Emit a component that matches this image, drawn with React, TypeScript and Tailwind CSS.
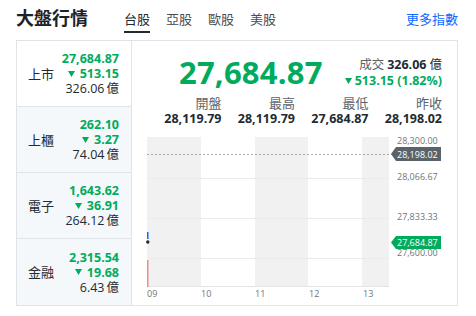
import React from "react";

const GREEN = "#00ab5e";

function Tri({ className = "" }: { className?: string }) {
  return (
    <svg width="7" height="6" viewBox="0 0 7 6" className={className}>
      <polygon points="0,0 7,0 3.5,6" fill={GREEN} />
    </svg>
  );
}

type Row = { name: string; price: string; chg: string; vol: string };

const rows: Row[] = [
  { name: "上市", price: "27,684.87", chg: "513.15", vol: "326.06" },
  { name: "上櫃", price: "262.10", chg: "3.27", vol: "74.04" },
  { name: "電子", price: "1,643.62", chg: "36.91", vol: "264.12" },
  { name: "金融", price: "2,315.54", chg: "19.68", vol: "6.43" },
];

const stats = [
  { label: "開盤", value: "28,119.79" },
  { label: "最高", value: "28,119.79" },
  { label: "最低", value: "27,684.87" },
  { label: "昨收", value: "28,198.02" },
];

function Chart() {
  const whiteBands = [
    { x: 69, w: 54 },
    { x: 176, w: 54 },
  ];
  const grid = [48, 88, 128];
  const priceLabels = [
    { t: "28,300.00", y: 11 },
    { t: "28,066.67", y: 47 },
    { t: "27,833.33", y: 87 },
    { t: "27,600.00", y: 123 },
  ];
  const times = [
    { t: "09", x: 15 },
    { t: "10", x: 69 },
    { t: "11", x: 123 },
    { t: "12", x: 177 },
    { t: "13", x: 231 },
  ];
  return (
    <svg width="325" height="174" viewBox="0 0 325 174" className="block">
      <rect x="15" y="7" width="242" height="150" fill="#f1f1f1" />
      {whiteBands.map((b, i) => (
        <rect key={i} x={b.x} y="7" width={b.w} height="150" fill="#ffffff" />
      ))}
      {grid.map((g) => (
        <line key={g} x1="15" x2="257" y1={g + 0.5} y2={g + 0.5} stroke="#eaeaea" strokeWidth="1" />
      ))}
      <line x1="15" x2="257" y1="156.5" y2="156.5" stroke="#e4e4e4" strokeWidth="1" />
      <line x1="15" x2="262" y1="24.5" y2="24.5" stroke="#a8a8a8" strokeWidth="1" strokeDasharray="2 2" />
      <rect x="15" y="130" width="1.5" height="27" fill="#f28b8b" />
      <rect x="15" y="102" width="1.5" height="7" fill="#0f69ff" />
      <circle cx="15.8" cy="112" r="1.7" fill="#232a31" />
      {priceLabels.map((p) => (
        <text key={p.t} x="265" y={p.y + 3} fontSize="9" fill="#6e757c">
          {p.t}
        </text>
      ))}
      <polygon points="259,24 264,17 309,17 309,31 264,31" fill="#5b636a" />
      <text x="265" y="27.5" fontSize="9" fill="#ffffff">
        28,198.02
      </text>
      <polygon points="259,112.5 264,106 309,106 309,119 264,119" fill={GREEN} />
      <text x="265" y="116" fontSize="9" fill="#ffffff">
        27,684.87
      </text>
      {times.map((t) => (
        <text key={t.t} x={t.x} y="167" fontSize="9" fill="#6e757c">
          {t.t}
        </text>
      ))}
    </svg>
  );
}

export default function App() {
  return (
    <div
      className="w-[476px] h-[316px] bg-white text-[#232a31] overflow-hidden"
      style={{ fontFamily: '"Open Sans", "Noto Sans CJK TC", sans-serif' }}
    >
      <div className="flex items-start h-[40px] pl-[16px] pr-[18px]">
        <div className="mt-[6px] text-[18px] leading-[24px] font-bold text-[#1d2228]">大盤行情</div>
        <div className="ml-[36px] flex gap-[16px]">
          {["台股", "亞股", "歐股", "美股"].map((t, i) => (
            <div
              key={t}
              className={
                i === 0
                  ? "pt-[10px] pb-[3px] leading-[18px] text-[13px] text-[#232a31] border-b-2 border-[#232a31]"
                  : "pt-[10px] pb-[3px] leading-[18px] text-[13px] text-[#464e56] border-b-2 border-transparent"
              }
            >
              {t}
            </div>
          ))}
        </div>
        <div className="ml-auto mt-[10px] leading-[18px] text-[13px] text-[#0f69ff]">更多指數</div>
      </div>

      <div className="ml-[16px] w-[442px] h-[266px] border border-[#e0e4e9] flex">
        <div className="w-[115px] border-r border-[#e0e4e9] flex flex-col">
          {rows.map((r, i) => (
            <div
              key={r.name}
              className={
                (i === 0 ? "bg-white " : "bg-[#f5f8fa] ") +
                (i < 3 ? "h-[66px] border-b border-[#e0e4e9] " : "h-[66px] ") +
                "flex items-center justify-between pl-[11px] pr-[12px]"
              }
            >
              <span className="text-[13px] leading-[16px] text-[#232a31]">{r.name}</span>
              <div className="flex flex-col items-end leading-[15px] text-[12.5px]">
                <span className="font-bold text-[#00ab5e]">{r.price}</span>
                <span className="font-bold text-[#00ab5e] flex items-center">
                  <Tri className="mr-[5px]" />
                  {r.chg}
                </span>
                <span className="text-[#232a31]">
                  {r.vol}
                  <span className="ml-[2px]">億</span>
                </span>
              </div>
            </div>
          ))}
        </div>

        <div className="flex-1 flex flex-col">
          <div className="mt-[15px] h-[33px] flex items-center justify-between pl-[47px] pr-[15px]">
            <span className="text-[31px] leading-[33px] font-bold text-[#00ab5e] tracking-[0.2px]">27,684.87</span>
            <div className="flex flex-col items-end text-[12.5px] leading-[16px]">
              <span>
                <span className="text-[#5b636a]">成交</span>
                <span className="font-bold text-[#232a31] ml-[3px]">326.06</span>
                <span className="text-[#232a31] ml-[3px]">億</span>
              </span>
              <span className="flex items-center font-bold text-[#00ab5e]">
                <Tri className="mr-[3px]" />
                513.15 (1.82%)
              </span>
            </div>
          </div>
          <div className="mt-[6px] grid grid-cols-4 pl-[16px] pr-[15px] text-[12.5px] leading-[16px]">
            {stats.map((s) => (
              <div key={s.label} className="flex flex-col items-end">
                <span className="text-[#5b636a] text-[13px]">{s.label}</span>
                <span className="font-bold text-[#232a31]">{s.value}</span>
              </div>
            ))}
          </div>
          <div className="mt-[3px]">
            <Chart />
          </div>
        </div>
      </div>
    </div>
  );
}
